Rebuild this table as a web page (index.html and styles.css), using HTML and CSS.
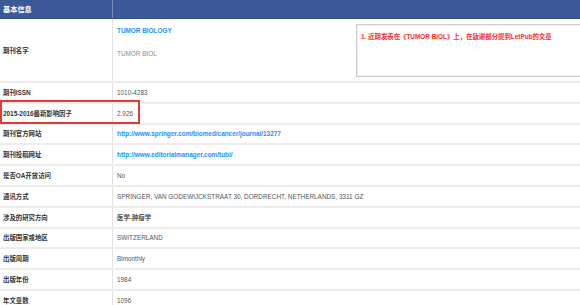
FILE: index.html
```html
<!DOCTYPE html>
<html lang="zh-CN">
<head>
<meta charset="utf-8">
<title>基本信息</title>
<link rel="stylesheet" href="styles.css">
</head>
<body>
<div class="info">
  <div class="row head">
    <div class="label">基本信息</div>
    <div class="value"></div>
  </div>
  <div class="row name-row">
    <div class="label">期刊名字</div>
    <div class="value name-value">
      <div class="names">
        <div class="full-name">TUMOR BIOLOGY</div>
        <div class="abbr">TUMOR BIOL</div>
      </div>
      <div class="notes">
        <div class="note">1. 近期发表在《TUMOR BIOL》上，在致谢部分提到LetPub的文章</div>
      </div>
    </div>
  </div>
  <div class="row">
    <div class="label">期刊ISSN</div>
    <div class="value">1010-4283</div>
  </div>
  <div class="row highlight-row">
    <div class="label">2015-2016最新影响因子</div>
    <div class="value">2.926</div>
    <div class="highlight"></div>
  </div>
  <div class="row">
    <div class="label">期刊官方网站</div>
    <div class="value"><a class="link" href="#">http://www.springer.com/biomed/cancer/journal/13277</a></div>
  </div>
  <div class="row">
    <div class="label">期刊投稿网址</div>
    <div class="value"><a class="link" href="#">http://www.editorialmanager.com/tubi/</a></div>
  </div>
  <div class="row">
    <div class="label">是否OA开放访问</div>
    <div class="value">No</div>
  </div>
  <div class="row">
    <div class="label">通讯方式</div>
    <div class="value">SPRINGER, VAN GODEWIJCKSTRAAT 30, DORDRECHT, NETHERLANDS, 3311 GZ</div>
  </div>
  <div class="row">
    <div class="label">涉及的研究方向</div>
    <div class="value strong">医学-肿瘤学</div>
  </div>
  <div class="row">
    <div class="label">出版国家或地区</div>
    <div class="value">SWITZERLAND</div>
  </div>
  <div class="row">
    <div class="label">出版周期</div>
    <div class="value">Bimonthly</div>
  </div>
  <div class="row">
    <div class="label">出版年份</div>
    <div class="value">1984</div>
  </div>
  <div class="row">
    <div class="label">年文章数</div>
    <div class="value">1096</div>
  </div>
</div>
</body>
</html>
```

FILE: styles.css
```css
html, body {
  margin: 0;
  padding: 0;
  background: #ffffff;
  overflow: hidden;
}

body {
  font-family: "Liberation Sans", "Noto Sans CJK SC", sans-serif;
  font-size: 6.4px;
  color: #555555;
}

.info {
  width: 580px;
}

.row {
  display: grid;
  grid-template-columns: 113px 1fr;
  height: 20.8px;
  box-sizing: border-box;
  border-bottom: 2px solid #ededed;
}

.label {
  display: flex;
  align-items: center;
  padding-left: 3px;
  font-weight: bold;
  color: #333333;
  border-right: 1px solid #e2e2e2;
  white-space: nowrap;
}

.value {
  display: flex;
  align-items: center;
  padding-left: 4px;
  white-space: nowrap;
  overflow: hidden;
}

.strong {
  font-weight: bold;
}

.head {
  height: 19px;
  background: #3b5998;
  border-bottom: 1px solid #34508a;
}

.head .label {
  color: #ffffff;
  font-size: 7.2px;
  border-right: 1px solid #7a8fbd;
}

.name-row {
  height: 64px;
}

.name-value {
  display: grid;
  grid-template-columns: 239px 240px;
  align-items: start;
}

.names {
  display: flex;
  flex-direction: column;
  padding-top: 8px;
}

.full-name {
  font-weight: bold;
  color: #1e90ff;
  line-height: 8px;
}

.abbr {
  margin-top: 15px;
  color: #8a8a8a;
  line-height: 8px;
}

.notes {
  margin-top: 5px;
  height: 53px;
  box-sizing: border-box;
  border: 1px solid #cfcfcf;
  box-shadow: inset 0 0 0 1px #eeeeee;
  padding: 8px 4px;
}

.note {
  color: #ff2a2a;
  font-weight: bold;
  line-height: 8px;
}

.link {
  color: #1e8fff;
  font-weight: bold;
  text-decoration: none;
}

.highlight-row {
  position: relative;
}

.highlight {
  position: absolute;
  left: 0;
  top: -3.5px;
  width: 140px;
  height: 24px;
  box-sizing: border-box;
  border: 2px solid #e53935;
  pointer-events: none;
}
```
